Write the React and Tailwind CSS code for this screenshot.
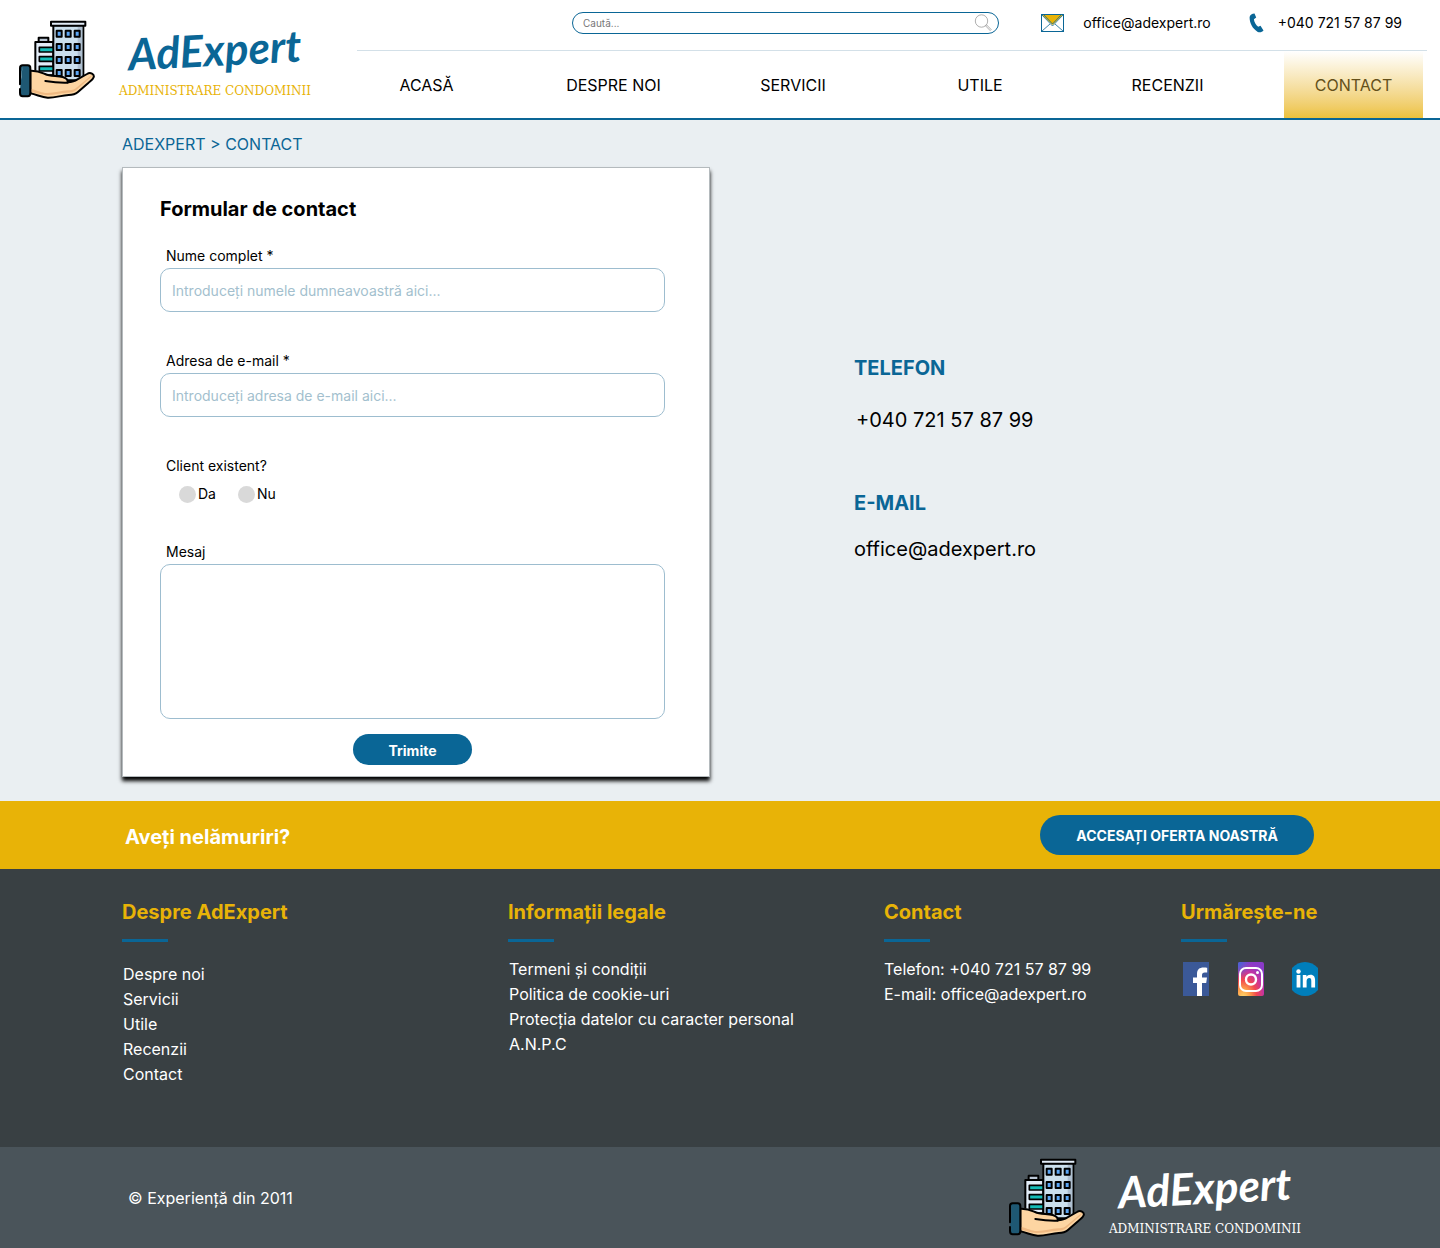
import React from "react";

function BuildingLogo() {
  const floors = [70, 110, 149, 188];
  const columns = [147, 174, 201];
  return (
    <svg viewBox="27 29 228 240" className="h-20 w-19 shrink-0" aria-hidden="true">
      <g stroke="#000" strokeWidth="6" strokeLinejoin="round" strokeLinecap="round">
        <rect x="86" y="82" width="29" height="14" fill="#b9c6d4" />
        <rect x="76" y="95" width="54" height="100" fill="#e3edf8" />
        <path d="M130 111H88v14h42M130 139H88v14h42M130 168H88v14h42" fill="#14bcb8" strokeWidth="5" />
        <rect x="130" y="45" width="90" height="165" fill="#cbdfed" />
        <path d="M203 48h14v155h-14z" fill="#aebfd0" stroke="none" />
        <rect x="123" y="34" width="103" height="12" fill="#e3edf8" />
        {floors.map((y) =>
          columns.map((x) => (
            <rect key={`${x}-${y}`} x={x - 7} y={y - 9} width="15" height="18" fill="#5ba6f5" strokeWidth="6" />
          ))
        )}
        <path
          d="M61 181c22-1 31 4 44 10 17 8 36 4 53 9 10 3 16 9 15 16 12-1 20-2 28-8l30-17c10-7 23 0 20 10-2 7-10 11-17 18l-31 27c-8 7-17 8-27 8-22 1-42 9-63 8-18-2-30-8-52-13z"
          fill="#fdd5a2"
        />
        <path d="M64 236c20 5 34 13 49 12 20 0 42-7 62-8 14 0 20-4 26-9l45-38c-2 10-11 13-19 21l-28 25c-8 7-19 8-28 8-20 1-42 8-62 7-17-1-30-7-45-10z" fill="#efb982" stroke="none" />
        <path d="M106 212c24 4 42 6 67 5" fill="none" />
        <path d="M38 165h15c6 0 8 3 8 8v75c0 7-3 10-8 10H38c-6 0-8-3-8-10v-12M30 222v-49c0-5 2-8 8-8" fill="#1e5873" />
      </g>
    </svg>
  );
}

function Brand({ nameClass, taglineClass }) {
  return (
    <a href="#" className="flex items-center gap-6" aria-label="AdExpert Administrare Condominii">
      <BuildingLogo />
      <span className="flex flex-col items-center">
        <span className={`-rotate-3 font-['Lato'] text-[44px] leading-[56px] font-bold italic ${nameClass}`}>AdExpert</span>
        <span className={`mt-1.5 font-['DejaVu_Serif'] text-xs leading-4 whitespace-nowrap ${taglineClass}`}>ADMINISTRARE CONDOMINII</span>
      </span>
    </a>
  );
}

function SearchIcon() {
  return (
    <svg viewBox="0 0 18 18" className="size-[18px] shrink-0" fill="none" stroke="#9a9a9a" strokeWidth="0.8" aria-hidden="true">
      <circle cx="7.5" cy="7" r="6.2" />
      <path d="M11.5 11.8l1-1 4.6 4.7-1 1z" />
    </svg>
  );
}

function MailIcon() {
  return (
    <svg viewBox="0 0 23 18" className="h-[18px] w-[23px] shrink-0" fill="none" stroke="#0a6696" aria-hidden="true">
      <path d="M1 1h21L11.5 11z" fill="#e8b307" stroke="none" />
      <rect x="0.5" y="0.5" width="22" height="17" />
      <path d="M1 1l10.500 11L22 1M1 17l8-7M22 17l-8-7M3 1l8.500 9L20 1" strokeWidth="0.8" />
    </svg>
  );
}

function PhoneIcon() {
  return (
    <svg viewBox="0 0 15 20" className="h-5 w-[15px] shrink-0" aria-hidden="true">
      <path d="M5.500 0.400L7.200 4.600 4.900 6.300C5.100 9 6.800 12 9.200 13.700L11.500 12.800 14.500 17.400C13.200 19 11 19.800 8.800 18.900 3.500 15.800 0.500 10 0.600 4 1.100 1.700 3 0.500 5.500 0.400z" fill="#0a6696" />
    </svg>
  );
}

function FacebookIcon() {
  return (
    <svg viewBox="0 0 26 34" className="h-[34px] w-[26px]" aria-hidden="true">
      <path d="M0 0h26v34H0z" fill="#3b5998" />
      <path d="M14 34V21h-4v-5.500h4v-3.500c0-4.500 2.500-6.500 6.500-6.500 1.700 0 3 .1 3.700.2v4.800h-2.400c-2 0-2.800 1-2.800 2.700v2.300h5l-.8 5.500H19v13z" fill="#fff" />
    </svg>
  );
}

function InstagramIcon() {
  return (
    <svg viewBox="0 0 26 34" className="h-[34px] w-[26px]" aria-hidden="true">
      <defs>
        <radialGradient id="ig-warm" cx="0.2" cy="1.05" r="1.05">
          <stop offset="0" stopColor="#ffdc70" />
          <stop offset="0.25" stopColor="#fda04a" />
          <stop offset="0.5" stopColor="#f2474f" />
          <stop offset="0.75" stopColor="#c733a0" />
          <stop offset="1" stopColor="#8a3ac8" />
        </radialGradient>
        <radialGradient id="ig-cool" cx="0" cy="0" r="0.5">
          <stop offset="0" stopColor="#4168d8" />
          <stop offset="1" stopColor="#4168d8" stopOpacity="0" />
        </radialGradient>
      </defs>
      <rect width="26" height="34" rx="2" fill="url(#ig-warm)" />
      <rect width="26" height="34" rx="2" fill="url(#ig-cool)" />
      <g fill="none" stroke="#fff" strokeWidth="2">
        <rect x="2" y="6" width="22" height="23" rx="6" />
        <circle cx="13" cy="17.500" r="5" strokeWidth="2.400" />
      </g>
      <circle cx="19.500" cy="10.500" r="1.500" fill="#fff" />
    </svg>
  );
}

function LinkedinIcon() {
  return (
    <svg viewBox="0 0 26 34" className="h-[34px] w-[26px]" aria-hidden="true">
      <path d="M0 6C7-2 19-2 26 6v22c-7 8-19 8-26 0z" fill="#007ebb" />
      <g fill="#fff">
        <circle cx="6.500" cy="9.500" r="2.200" />
        <path d="M4.600 13h3.800v12.500H4.600zM10.800 13h3.600v1.800c.8-1.300 2.200-2.100 4-2.100 3.600 0 4.700 2.200 4.700 5.800v7h-3.800v-6.200c0-2-.4-3.200-2-3.200-1.900 0-2.700 1.300-2.700 3.200v6.200h-3.800z" />
      </g>
    </svg>
  );
}

function Header() {
  const link = "flex items-center justify-center whitespace-nowrap";
  return (
    <header className="flex border-b-2 border-[#0a6696] bg-white">
      <div className="flex w-[357px] shrink-0 items-center pt-0.5 pl-[19px]">
        <Brand nameClass="text-[#0a6696]" taglineClass="text-[#e8b307]" />
      </div>
      <div className="mr-[13px] flex-1">
        <div className="flex items-center border-b border-[#d3e0e8] pt-3 pr-[25px] pb-4 pl-[215px] text-sm leading-[22px]">
          <label className="flex h-[22px] flex-1 items-center rounded-full border border-[#0a6696] pr-1.5 pl-2.5">
            <input type="search" aria-label="Caută" placeholder="Caută..." className="min-w-0 flex-1 text-[10px] leading-4 outline-none placeholder:text-[#777]" />
            <SearchIcon />
          </label>
          <a href="mailto:office@adexpert.ro" className="ml-[42px] flex items-center gap-[19px]">
            <MailIcon />
            office@adexpert.ro
          </a>
          <a href="tel:+040721578799" className="ml-[38px] flex items-center gap-3.5">
            <PhoneIcon />
            +040 721 57 87 99
          </a>
        </div>
        <nav className="mr-1 grid h-[67px] grid-cols-[139fr_139fr_124fr_154fr_125fr_145fr] gap-12">
          <a href="#acasa" className={link}>ACASĂ</a>
          <a href="#despre" className={link}>DESPRE NOI</a>
          <a href="#servicii" className={link}>SERVICII</a>
          <a href="#utile" className={link}>UTILE</a>
          <a href="#recenzii" className={link}>RECENZII</a>
          <a href="#contact" aria-current="page" className={`${link} ml-1.5 bg-linear-to-b from-white to-[#edc23a] text-[#64501a]`}>CONTACT</a>
        </nav>
      </div>
    </header>
  );
}

function ContactForm() {
  const label = "block pl-1.5 text-sm leading-6";
  const field = "block w-full rounded-[10px] border border-[#9dbdcf] bg-white px-[11px] text-sm outline-none placeholder:text-[#a3bfce]";
  const radio = "size-[17px] appearance-none rounded-full bg-[#d9d9d9] checked:bg-[#0a6696]";
  return (
    <form
      onSubmit={(e) => e.preventDefault()}
      className="border border-[#b4babd] bg-white pt-[26px] pr-11 pb-[11px] pl-[37px] shadow-[0_4px_4px_#000]"
    >
      <h1 className="text-xl leading-[30px] font-bold">Formular de contact</h1>
      <div className="mt-5">
        <label htmlFor="nume" className={label}>Nume complet *</label>
        <input id="nume" type="text" placeholder="Introduceți numele dumneavoastră aici..." className={`${field} h-11`} />
      </div>
      <div className="mt-[37px]">
        <label htmlFor="email" className={label}>Adresa de e-mail *</label>
        <input id="email" type="email" placeholder="Introduceți adresa de e-mail aici..." className={`${field} h-11`} />
      </div>
      <fieldset className="mt-[37px]">
        <legend className={label}>Client existent?</legend>
        <div className="flex gap-[22px] pt-1 pl-[19px] text-sm leading-6">
          <label className="flex items-center gap-0.5">
            <input type="radio" name="client" value="da" className={radio} />
            Da
          </label>
          <label className="flex items-center gap-0.5">
            <input type="radio" name="client" value="nu" className={radio} />
            Nu
          </label>
        </div>
      </fieldset>
      <div className="mt-[34px]">
        <label htmlFor="mesaj" className={label}>Mesaj</label>
        <textarea id="mesaj" className={`${field} h-[155px] resize-none py-3`} />
      </div>
      <button type="submit" className="mx-auto mt-[15px] block h-[31px] w-[119px] rounded-full bg-[#0a6696] pt-0.5 text-sm font-bold text-white">
        Trimite
      </button>
    </form>
  );
}

function FooterColumn({ title, children }) {
  return (
    <section>
      <h2 className="text-xl leading-7 font-bold whitespace-nowrap text-[#e8b307]">{title}</h2>
      <div className="mt-[13px] h-[3px] w-[46px] bg-[#0a6696]" />
      {children}
    </section>
  );
}

function LinkList({ items }) {
  return (
    <ul className="mt-[15px] pl-px leading-[25px]">
      {items.map((item) => (
        <li key={item}>
          <a href="#">{item}</a>
        </li>
      ))}
    </ul>
  );
}

export default function App() {
  return (
    <div className="min-h-screen bg-[#eaeff2] font-['Inter',sans-serif] text-base text-black">
      <Header />
      <main className="px-[122px] pt-3 pb-6">
        <nav aria-label="Breadcrumb" className="leading-6 text-[#0a6696]">
          <a href="#">ADEXPERT</a> &gt; <a href="#contact">CONTACT</a>
        </nav>
        <div className="mt-[11px] grid grid-cols-[588fr_464fr] gap-36">
          <ContactForm />
          <section className="pt-[186px] text-xl leading-[30px]">
            <h2 className="font-bold text-[#0a6696]">TELEFON</h2>
            <p className="mt-[22px] pl-0.5">+040 721 57 87 99</p>
            <h2 className="mt-[53px] font-bold text-[#0a6696]">E-MAIL</h2>
            <p className="mt-4">office@adexpert.ro</p>
          </section>
        </div>
      </main>
      <section className="flex items-center justify-between bg-[#e8b307] py-3.5 pr-[126px] pl-[125px] text-white">
        <p className="pt-1 text-xl leading-7 font-bold">Aveți nelămuriri?</p>
        <a href="#oferta" className="rounded-full bg-[#0a6696] px-9 pt-[11px] pb-[9px] text-sm leading-5 font-bold">ACCESAȚI OFERTA NOASTRĂ</a>
      </section>
      <footer className="text-white">
        <div className="grid grid-cols-[386fr_376fr_297fr_137fr] bg-[#394043] px-[122px] pt-[29px] pb-[60px]">
          <FooterColumn title="Despre AdExpert">
            <div className="pt-[5px]">
              <LinkList items={["Despre noi", "Servicii", "Utile", "Recenzii", "Contact"]} />
            </div>
          </FooterColumn>
          <FooterColumn title="Informații legale">
            <LinkList items={["Termeni și condiții", "Politica de cookie-uri", "Protecția datelor cu caracter personal", "A.N.P.C"]} />
          </FooterColumn>
          <FooterColumn title="Contact">
            <address className="mt-[15px] leading-[25px] not-italic">
              Telefon: <a href="tel:+040721578799">+040 721 57 87 99</a>
              <br />
              E-mail: <a href="mailto:office@adexpert.ro">office@adexpert.ro</a>
            </address>
          </FooterColumn>
          <FooterColumn title="Urmărește-ne">
            <div className="mt-5 flex justify-between pl-0.5">
              <a href="#facebook" aria-label="Facebook"><FacebookIcon /></a>
              <a href="#instagram" aria-label="Instagram"><InstagramIcon /></a>
              <a href="#linkedin" aria-label="LinkedIn"><LinkedinIcon /></a>
            </div>
          </FooterColumn>
        </div>
        <div className="flex items-center justify-between bg-[#4a545a] pt-[11px] pr-[139px] pb-2.5 pl-32">
          <p>© Experiență din 2011</p>
          <Brand nameClass="text-white" taglineClass="text-white" />
        </div>
      </footer>
    </div>
  );
}
